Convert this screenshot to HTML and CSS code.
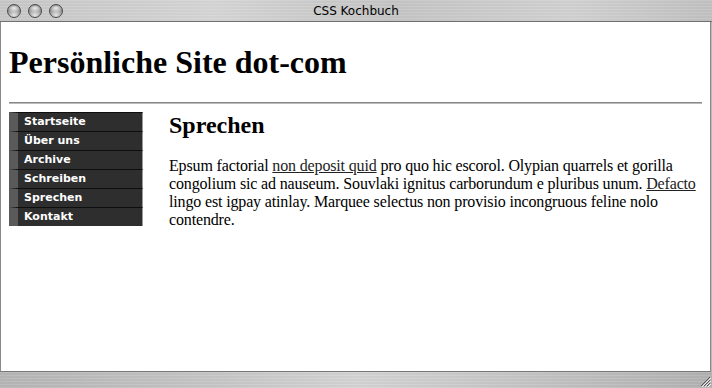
FILE: index.html
```html
<!DOCTYPE html>
<html lang="de">
<head>
    <meta charset="UTF-8">
    <meta name="viewport" content="width=device-width, initial-scale=1.0">
    <title>CSS Kochbuch</title>
    <link rel="stylesheet" href="styles.css">
</head>
<body>
    <div class="window">
        <div class="titlebar">
            <div class="lights">
                <span class="light"></span>
                <span class="light"></span>
                <span class="light"></span>
            </div>
            <div class="title">CSS Kochbuch</div>
            <div></div>
        </div>

        <div class="viewport">
            <div class="page">
                <h1>Persönliche Site dot-com</h1>
                <hr>
                <div class="layout">
                    <ul class="nav">
                        <li><a href="#">Startseite</a></li>
                        <li><a href="#">Über uns</a></li>
                        <li><a href="#">Archive</a></li>
                        <li><a href="#">Schreiben</a></li>
                        <li><a href="#">Sprechen</a></li>
                        <li><a href="#">Kontakt</a></li>
                    </ul>
                    <div class="content">
                        <h2>Sprechen</h2>
                        <p>Epsum factorial <a href="#">non deposit quid</a> pro quo hic escorol. Olypian quarrels et gorilla congolium sic ad nauseum. Souvlaki ignitus carborundum e pluribus unum. <a href="#">Defacto</a> lingo est igpay atinlay. Marquee selectus non provisio incongruous feline nolo contendre.</p>
                    </div>
                </div>
            </div>
        </div>

        <!-- untere Leiste mit Greifer -->
        <div class="statusbar">
            <svg class="grip" width="12" height="12" viewBox="0 0 12 12">
                <path d="M11 2 L2 11 M11 5 L5 11 M11 8 L8 11" stroke="#555" stroke-width="1"/>
                <path d="M12 3 L3 12 M12 6 L6 12 M12 9 L9 12" stroke="#eee" stroke-width="1"/>
            </svg>
        </div>
    </div>
</body>
</html>
```

FILE: styles.css
```css
html, body {
    margin: 0;
    padding: 0;
    background-color: #b8b8b8;
}

.window {
    width: 712px;
    height: 388px;
    display: flex;
    flex-direction: column;
    overflow: hidden;
}

.titlebar {
    height: 22px;
    flex: none;
    display: grid;
    grid-template-columns: 1fr auto 1fr;
    align-items: center;
    background:
        repeating-linear-gradient(180deg, rgba(255,255,255,0.06) 0 1px, rgba(0,0,0,0.02) 1px 3px),
        linear-gradient(90deg, #c8c8c8 0%, #d6d6d6 30%, #c6c6c6 55%, #d2d2d2 80%, #c2c2c2 100%);
    border-bottom: 1px solid #707070;
    box-sizing: border-box;
}

.lights {
    display: flex;
    gap: 7px;
    padding-left: 7px;
    padding-top: 1px;
}

.light {
    width: 14px;
    height: 14px;
    border-radius: 50%;
    box-sizing: border-box;
    border: 1px solid #4a4a4a;
    background:
        radial-gradient(ellipse 60% 35% at 50% 25%, rgba(255,255,255,0.85) 0%, rgba(255,255,255,0) 100%),
        radial-gradient(circle at 50% 85%, #e6e6e6 0%, #a8a8a8 45%, #5c5c5c 100%);
}

.title {
    font-family: "DejaVu Sans", Verdana, sans-serif;
    font-size: 12px;
    color: #000;
    padding-top: 1px;
}

.viewport {
    flex: 1;
    background-color: #ffffff;
    border-left: 1px solid #8a8a8a;
    border-right: 1px solid #8a8a8a;
    margin-right: 1px;
    border-bottom: 1px solid #777;
}

.page {
    padding: 8px;
    font-family: "Liberation Serif", "Times New Roman", serif;
    color: #000;
}

h1 {
    font-size: 32px;
    margin: 14px 0 21px;
}

hr {
    margin: 0 0 8px;
    border: none;
    border-top: 1px solid #888;
    border-bottom: 1px solid #bbb;
}

.layout {
    display: flex;
    gap: 26px;
    align-items: flex-start;
}

.nav {
    list-style: none;
    margin: 0;
    padding: 0;
    width: 134px;
    flex: none;
}

.nav li {
    height: 19px;
    box-sizing: border-box;
    border-top: 1px solid #0e0e0e;
    border-left: 9px solid #5a5a5a;
    border-right: 1px solid #9a9a9a;
    background-color: #2e2e2e;
}

.nav a {
    display: block;
    padding-left: 6px;
    line-height: 18px;
    font-family: "DejaVu Sans", Verdana, sans-serif;
    font-size: 11px;
    font-weight: bold;
    color: #ffffff;
    text-decoration: none;
}

.content {
    flex: 1;
}

h2 {
    font-size: 24px;
    margin: 0 0 18px;
}

p {
    font-size: 16px;
    line-height: 18px;
    letter-spacing: -0.15px;
    margin: 0;
}

p a {
    color: #222;
    text-decoration: underline;
}

.statusbar {
    height: 16px;
    flex: none;
    display: flex;
    justify-content: flex-end;
    align-items: flex-end;
    background:
        repeating-linear-gradient(180deg, rgba(255,255,255,0.06) 0 1px, rgba(0,0,0,0.03) 1px 3px),
        linear-gradient(90deg, #b8b8b8 0%, #c8c8c8 30%, #d6d6d6 50%, #c6c6c6 75%, #b4b4b4 100%);
}

.grip {
    display: block;
    margin: 0 1px 1px 0;
}
```
